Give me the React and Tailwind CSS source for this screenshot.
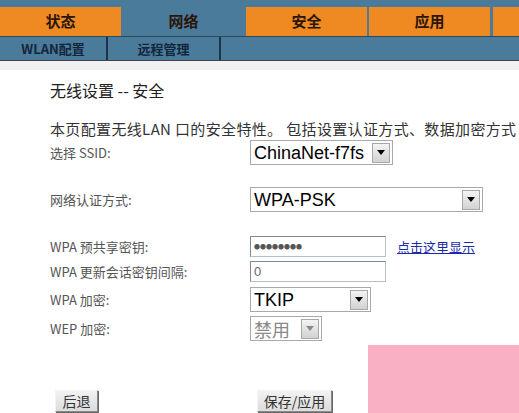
import React from "react";

const cjk = { fontFamily: '"Noto Sans CJK SC", "Liberation Sans", sans-serif' };
const arial = { fontFamily: '"Liberation Sans", "Noto Sans CJK SC", sans-serif' };

function Arrow({ disabled }) {
  return (
    <div className="flex h-[20px] w-[18px] items-center justify-center border border-[#a8a8a8] bg-gradient-to-b from-[#f4f4f4] to-[#d2d2d2]">
      <div
        className={
          "h-0 w-0 border-x-[4px] border-t-[5px] border-x-transparent " +
          (disabled ? "border-t-[#8a8a8a]" : "border-t-black")
        }
      />
    </div>
  );
}

function FakeSelect({ value, width, disabled }) {
  return (
    <div
      className="flex h-[25px] items-center justify-between border border-[#a9a9a9] bg-white pl-[3px] pr-[2px]"
      style={{ width }}
    >
      <span
        className={"text-[18px] leading-none " + (disabled ? "text-[#888]" : "text-black")}
        style={disabled ? cjk : arial}
      >
        {value}
      </span>
      <Arrow disabled={disabled} />
    </div>
  );
}

function TextBox({ children }) {
  return (
    <div className="flex h-[21px] w-[136px] items-center border border-[#b4c0cc] border-t-[#7f8a96] border-l-[#7f8a96] bg-white px-[3px]">
      {children}
    </div>
  );
}

function Label({ children }) {
  return (
    <div className="w-[200px] text-[13px] text-[#555]" style={cjk}>
      {children}
    </div>
  );
}

export default function App() {
  const tabs = [
    { name: "状态", active: false },
    { name: "网络", active: true },
    { name: "安全", active: false },
    { name: "应用", active: false },
  ];

  return (
    <div className="relative h-[413px] w-[519px] overflow-hidden bg-white" style={cjk}>
      {/* top menu */}
      <div className="bg-[#4b7b9b] pt-[7px]">
        <div className="flex h-[29px] gap-[2px]">
          {tabs.map((t) => (
            <div
              key={t.name}
              className={
                "flex w-[121px] items-center justify-center text-[15px] font-bold text-[#2a1608] " +
                (t.active ? "bg-[#4b7b9b]" : "bg-[#ef8a22]")
              }
            >
              {t.name}
            </div>
          ))}
          <div className="ml-[1px] flex-1 bg-[#ef8a22]" />
        </div>
        <div className="h-[1px] bg-[#2c4a60]" />
        <div className="flex h-[23px] items-center text-[13px] font-bold text-[#13263a]">
          <div className="flex h-full w-[108px] items-center justify-center border-r-2 border-[#1d3448]">
            WLAN配置
          </div>
          <div className="flex h-full w-[113px] items-center justify-center border-r-2 border-[#1d3448]">
            远程管理
          </div>
        </div>
      </div>
      <div className="h-[1px] bg-[#444]" />
      <div className="h-[9px] bg-[#f1f1f1]" />

      {/* content */}
      <div className="pl-[50px]">
        <div className="mt-[9px] text-[16px] leading-[22px] text-[#222]">无线设置 -- 安全</div>
        <div className="mt-[18px] whitespace-nowrap text-[15px] leading-[20px] tracking-[0.35px] text-[#333]">
          本页配置无线LAN 口的安全特性。 包括设置认证方式、数据加密方式
        </div>

        <div className="mt-[1px] flex items-center">
          <Label>选择 SSID:</Label>
          <FakeSelect value="ChinaNet-f7fs" width={143} />
        </div>

        <div className="mt-[22px] flex items-center">
          <Label>网络认证方式:</Label>
          <FakeSelect value="WPA-PSK" width={233} />
        </div>

        <div className="mt-[24px] flex items-center">
          <Label>WPA 预共享密钥:</Label>
          <TextBox>
            <span className="text-[6px] leading-none tracking-[0px] text-[#555]">●●●●●●●●</span>
          </TextBox>
          <a className="ml-[11px] text-[13px] text-[#1d2aa8] underline" style={cjk}>
            点击这里显示
          </a>
        </div>

        <div className="mt-[4px] flex items-center">
          <Label>WPA 更新会话密钥间隔:</Label>
          <TextBox>
            <span className="text-[13px] leading-none text-[#666]" style={arial}>
              0
            </span>
          </TextBox>
        </div>

        <div className="mt-[5px] flex items-center">
          <Label>WPA 加密:</Label>
          <FakeSelect value="TKIP" width={121} />
        </div>

        <div className="mt-[4px] flex items-center">
          <Label>WEP 加密:</Label>
          <FakeSelect value="禁用" width={72} disabled />
        </div>

        <div className="mt-[49px] flex items-center">
          <button className="ml-[5px] h-[22px] w-[43px] border border-[#8a8a8a] border-t-[#f4f4f4] border-l-[#f4f4f4] bg-gradient-to-b from-[#f2f2f2] to-[#dcdcdc] text-[14px] leading-none text-[#333] shadow-[1px_1px_0_#666]">
            后退
          </button>
          <button className="ml-[159px] h-[22px] w-[75px] border border-[#8a8a8a] border-t-[#f4f4f4] border-l-[#f4f4f4] bg-gradient-to-b from-[#f2f2f2] to-[#dcdcdc] text-[14px] leading-none text-[#333] shadow-[1px_1px_0_#666]">
            保存/应用
          </button>
        </div>
      </div>

      {/* pink overlay block */}
      <div className="absolute left-[368px] top-[345px] h-[68px] w-[151px] bg-[#f9b0c4]" />
    </div>
  );
}
